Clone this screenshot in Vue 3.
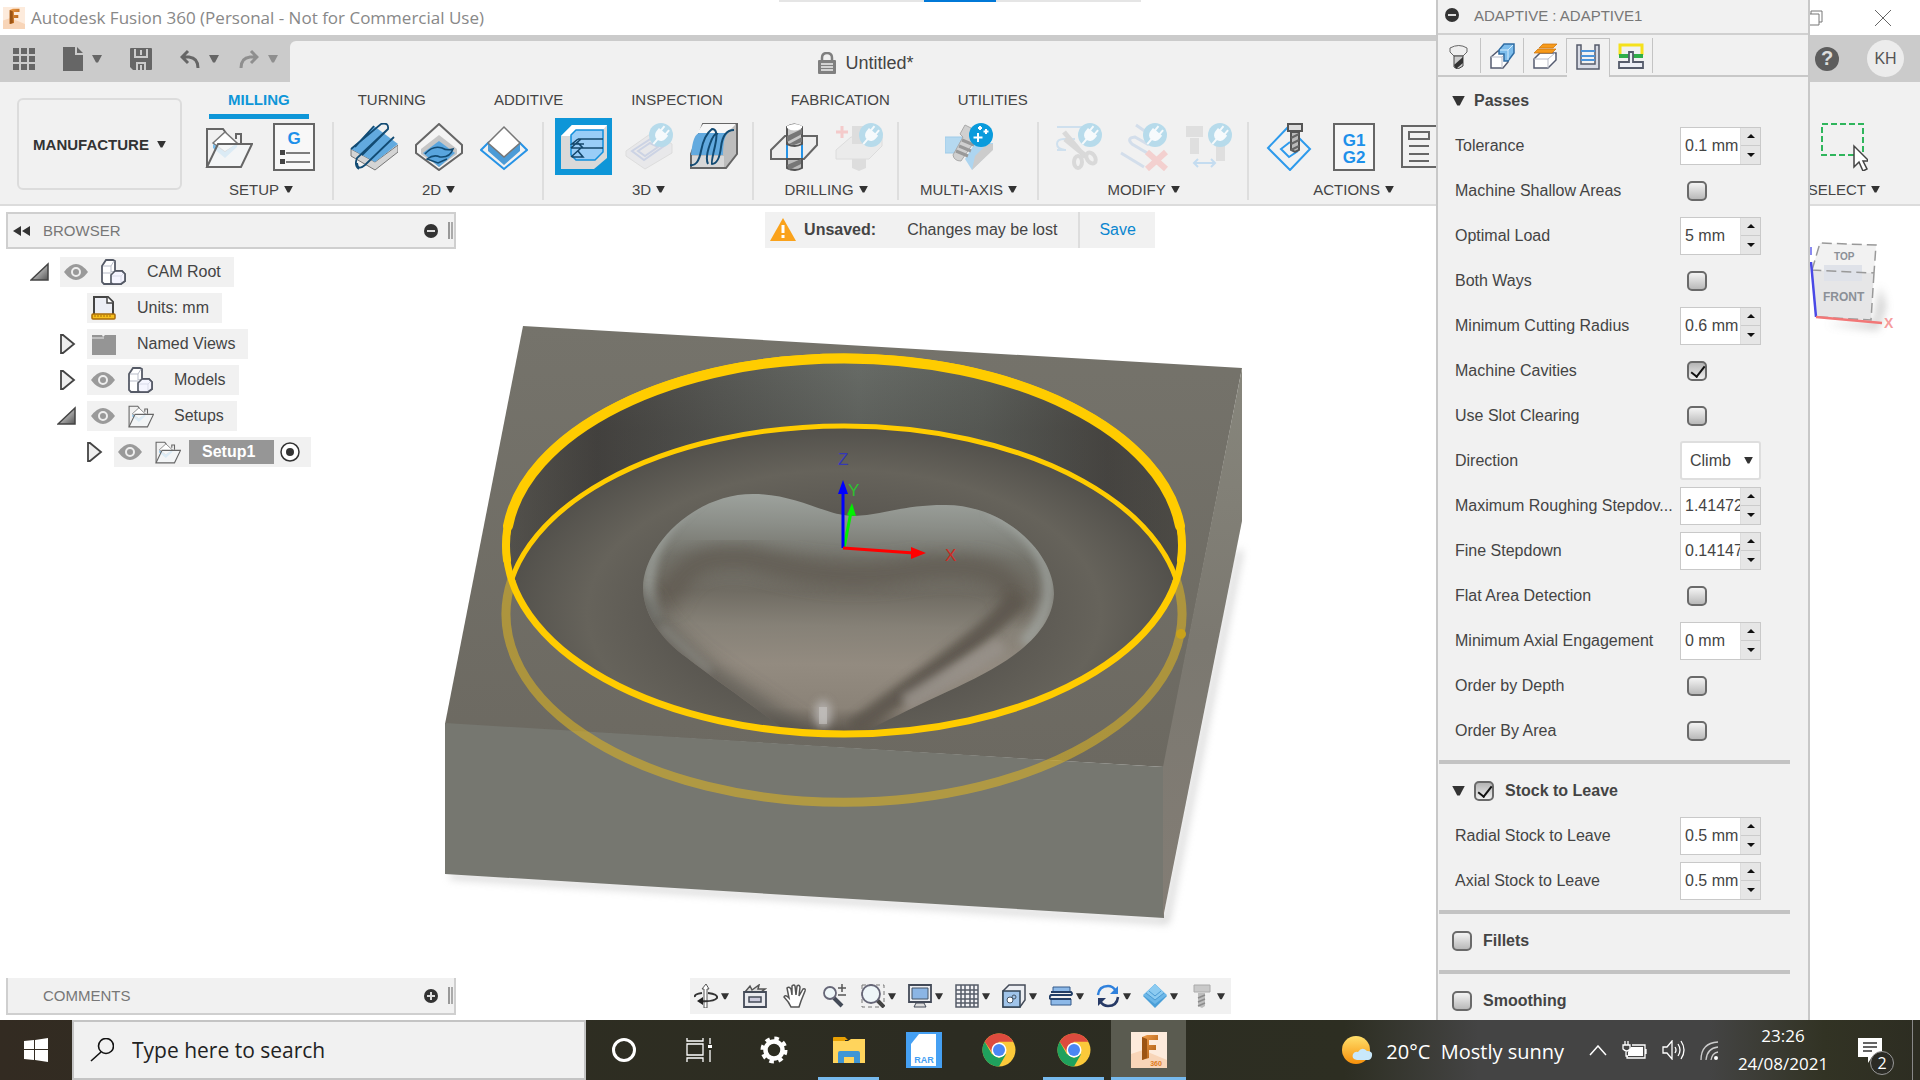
<script setup>
import { ref } from 'vue';

const ribbonTabs = ['MILLING', 'TURNING', 'ADDITIVE', 'INSPECTION', 'FABRICATION', 'UTILITIES'];
const activeTab = ref('MILLING');

const groups = [
    { label: 'SETUP', icons: ['setup', 'gcode'] },
    { label: '2D', icons: ['face', 'pocket', 'contour'] },
    { label: '3D', icons: ['adaptive', 'flow', 'parallel'] },
    { label: 'DRILLING', icons: ['drill', 'recognize'] },
    { label: 'MULTI-AXIS', icons: ['multi'] },
    { label: 'MODIFY', icons: ['trim', 'remove', 'replace'] },
    { label: 'ACTIONS', icons: ['simulate', 'post', 'sheet'] }
];
const activeTool = ref('adaptive');

// letras desenhadas dentro dos icones
const iconText = {
    gcode: [{ t: 'G', x: 24, y: 21, size: 17, color: '#1d90ea' }],
    post: [
        { t: 'G1', x: 24, y: 23, size: 17, color: '#1d90ea' },
        { t: 'G2', x: 24, y: 40, size: 17, color: '#1d90ea' }
    ],
    rar: [{ t: 'RAR', x: 18, y: 31, size: 9, color: '#45a0f3' }],
    fusion: [{ t: '360', x: 25, y: 34, size: 7, color: '#dd7a21' }]
};

const tree = ref([
    { label: 'CAM Root', level: 0, arrow: 'open', eye: true, icon: 'cubes' },
    { label: 'Units: mm', level: 1, arrow: '', eye: false, icon: 'units' },
    { label: 'Named Views', level: 1, arrow: 'closed', eye: false, icon: 'folder' },
    { label: 'Models', level: 1, arrow: 'closed', eye: true, icon: 'cubes' },
    { label: 'Setups', level: 1, arrow: 'open', eye: true, icon: 'setup' },
    { label: 'Setup1', level: 2, arrow: 'closed', eye: true, icon: 'setup', selected: true }
]);

const panelTabs = ['tool', 'geometry', 'heights', 'passes', 'linking'];
const activePanelTab = ref('passes');

// type: num = campo com setas, check = caixa, list = lista
const passes = ref([
    { id: 'tolerance', label: 'Tolerance', type: 'num', value: '0.1 mm' },
    { id: 'shallow', label: 'Machine Shallow Areas', type: 'check', value: false },
    { id: 'load', label: 'Optimal Load', type: 'num', value: '5 mm' },
    { id: 'both', label: 'Both Ways', type: 'check', value: false },
    { id: 'radius', label: 'Minimum Cutting Radius', type: 'num', value: '0.6 mm' },
    { id: 'cavities', label: 'Machine Cavities', type: 'check', value: true },
    { id: 'slot', label: 'Use Slot Clearing', type: 'check', value: false },
    { id: 'direction', label: 'Direction', type: 'list', value: 'Climb' },
    { id: 'rough', label: 'Maximum Roughing Stepdov...', type: 'num', value: '1.41472' },
    { id: 'fine', label: 'Fine Stepdown', type: 'num', value: '0.14147' },
    { id: 'flat', label: 'Flat Area Detection', type: 'check', value: false },
    { id: 'axialmin', label: 'Minimum Axial Engagement', type: 'num', value: '0 mm' },
    { id: 'depth', label: 'Order by Depth', type: 'check', value: false },
    { id: 'area', label: 'Order By Area', type: 'check', value: false }
]);
const stock = ref([
    { id: 'radial', label: 'Radial Stock to Leave', value: '0.5 mm' },
    { id: 'axial', label: 'Axial Stock to Leave', value: '0.5 mm' }
]);
const stockOn = ref(true);
const fillets = ref(false);
const smoothing = ref(false);

const step = (row, delta) => {
    const n = parseFloat(row.value);
    if (!isNaN(n)) row.value = Math.round((n + delta) * 1e5) / 1e5 + ' mm';
};

const navTools = [
    { icon: 'orbit', menu: true },
    { icon: 'lookat' },
    { icon: 'hand' },
    { icon: 'zoom' },
    { icon: 'zoomwin', menu: true },
    { icon: 'display', menu: true },
    { icon: 'gridset', menu: true },
    { icon: 'views', menu: true },
    { icon: 'layers', menu: true },
    { icon: 'refresh', menu: true },
    { icon: 'stockview', menu: true },
    { icon: 'bolt', menu: true }
];

const taskApps = [
    { icon: 'cortana', state: '' },
    { icon: 'taskview', state: '' },
    { icon: 'gear', state: '' },
    { icon: 'explorer', state: 'open' },
    { icon: 'rar', state: '' },
    { icon: 'chrome', state: '' },
    { icon: 'chrome', state: 'open' },
    { icon: 'fusion', state: 'current' }
];
</script>

<template>
    <div class="app">
        <!-- icones -->
        <svg class="sprite" width="0" height="0" aria-hidden="true">
            <defs>
                <linearGradient id="tri" x1="0" y1="0" x2="1" y2="1"><stop offset="0" stop-color="#fff" /><stop offset="1" stop-color="#555" /></linearGradient>
                <linearGradient id="sun" x1="0" y1="0" x2="0" y2="1"><stop offset="0" stop-color="#ffdf6b" /><stop offset="1" stop-color="#f7900a" /></linearGradient>
                <linearGradient id="fus" x1="0" y1="0" x2="1" y2="1"><stop offset="0" stop-color="#f3a04d" /><stop offset="1" stop-color="#a5540c" /></linearGradient>
            </defs>
            <symbol id="i-caret" viewBox="0 0 10 8"><path d="M0 0h10L6 7.500H4z" fill="currentColor" /></symbol>
            <symbol id="i-apps" viewBox="0 0 22 22"><path d="M0 0h6v6H0zM8 0h6v6H8zM16 0h6v6h-6zM0 8h6v6H0zM8 8h6v6H8zM16 8h6v6h-6zM0 16h6v6H0zM8 16h6v6H8zM16 16h6v6h-6z" fill="#666" /></symbol>
            <symbol id="i-file" viewBox="0 0 20 24"><path d="M0 0h12v8h8v16H0zM14 0l6 6h-6z" fill="#666" /></symbol>
            <symbol id="i-save" viewBox="0 0 22 22"><path d="M0 1q0-1 1-1h20q1 0 1 1v20q0 1-1 1H3l-3-3z" fill="#666" /><path d="M5 1v8h12V1M7 22v-7h8v7M11 17v5M11 2v5" fill="none" stroke="#cbcbcb" stroke-width="2" /></symbol>
            <symbol id="i-undo" viewBox="0 0 20 20"><path d="M8 2L2 8l6 6M2 8h7q9 1 9 11" fill="none" stroke="#666" stroke-width="3" /></symbol>
            <symbol id="i-redo" viewBox="0 0 20 20"><path d="M12 2l6 6-6 6M18 8h-7q-9 1-9 11" fill="none" stroke="#8f8f8f" stroke-width="3" /></symbol>
            <symbol id="i-lock" viewBox="0 0 18 22"><path d="M4 10V6q0-5 5-5t5 5v4" fill="none" stroke="#808080" stroke-width="2.500" /><rect y="8" width="18" height="14" rx="1" fill="#808080" /><path d="M3 12h12M3 15h12M3 18h12" stroke="#eee" stroke-width="1.500" /></symbol>
            <symbol id="i-warn" viewBox="0 0 26 24"><path d="M13 0l13 23H0z" fill="#faa21b" /><path d="M13 7v8M13 17v3" stroke="#fff" stroke-width="3" /></symbol>

            <symbol id="i-setup" viewBox="0 0 48 48"><path d="M2 44V6h16l3 4M31 16v-5h5v9" fill="none" stroke="#666" stroke-width="2" /><path d="M8 20L20 9l13 12-13 8z" fill="#fff" stroke="#777" stroke-width="1.500" /><path d="M8 21v4l12 10 12-11v-4l-12 9z" fill="#7bbdea" /><path d="M2 44L13 21h34L36 44z" fill="#f4f6f8" fill-opacity=".8" stroke="#666" stroke-width="2" /></symbol>
            <symbol id="i-gcode" viewBox="0 0 48 48"><rect x="4" y="1" width="40" height="46" fill="#f8f8f8" stroke="#666" stroke-width="2" /><path d="M10 27h5v5h-5zM10 36h5v5h-5z" fill="#444" /><path d="M16 30h24M16 39h24" stroke="#555" stroke-width="1.500" /></symbol>
            <symbol id="i-face" viewBox="0 0 48 48"><path d="M1 26v7l24 14 23-18v-7L25 39z" fill="#d4d4d4" stroke="#777" /><path d="M1 26L24 3l24 18-23 18z" fill="#62aadf" /><path d="M1 26L31 1q8-2 7 5L7 35q-3 8 2 11M12 32L38 6M7 40q1 8 8 2L44 14M24 3L5 24" fill="none" stroke="#124b73" stroke-width="1.800" /></symbol>
            <symbol id="i-pocket" viewBox="0 0 48 48"><path d="M24 1l23 21v8L24 47 1 30v-8z" fill="#f4f4f4" stroke="#666" stroke-width="2" /><path d="M24 12L6 26v5l18 13 18-13v-5z" fill="#c6c6c6" /><path d="M24 18L8 30l16 14 16-14z" fill="#59a5de" /><path d="M10 31q8-9 17-6 5 3 11 1-3 9-13 8-6-3-13 2l11 4 9-4" fill="none" stroke="#124b73" stroke-width="1.500" /></symbol>
            <symbol id="i-contour" viewBox="0 0 48 48"><path d="M9 19l-8 8 23 19 23-19-8-8" fill="none" stroke="#2693e6" stroke-width="2" /><path d="M8 20v8l16 14 16-14v-8L24 34z" fill="#4b9bd7" /><path d="M24 4l16 16-16 14L8 20z" fill="#fff" stroke="#777" stroke-width="1.500" /></symbol>
            <symbol id="i-adaptive" viewBox="0 0 48 48"><path d="M1 13L12 2h35v33L34 46H1z" fill="#d9d9d9" /><path d="M1 13L12 2h35l-4 5H16L11 13z" fill="#fff" /><path d="M11 12l5-5h27v22l-8 8H16l-5-5z" fill="#99cdf7" stroke="#118fdc" stroke-width="1.500" /><path d="M18 16h25M18 25h25M11 25l10-9M11 34l10-9M11 25h12l-5-5M12 34h11l-5-6M18 16l-6 5h12" fill="none" stroke="#14476b" stroke-width="1.600" /></symbol>
            <symbol id="i-plug" viewBox="0 0 24 24"><circle cx="12" cy="12" r="12" fill="#b7dbeb" /><g transform="rotate(40 12 12)" fill="#f6fafc"><path d="M8 3h2v6H8zM14 3h2v6h-2zM6 8h12v4a6 6 0 0 1-12 0zM11 17h2v7h-2z" /></g></symbol>
            <symbol id="i-flow" viewBox="0 0 48 48"><path d="M1 28L28 9l19 12v9L20 46 1 33z" fill="#e8e8ea" stroke="#ddd" /><path d="M7 28l20-13 12 8-20 14zM13 28l12-8 8 4-13 9z" fill="none" stroke="#ccd3e4" stroke-width="2" /><use href="#i-plug" x="24" y="0" width="24" height="24" /></symbol>
            <symbol id="i-parallel" viewBox="0 0 48 48"><path d="M13 1h34v30L36 45H1V31z" fill="#bdbdbd" stroke="#666" stroke-width="2" /><path d="M13 1h33l-9 9H7z" fill="#f7f7f7" /><path d="M1 32Q3 10 10 10h28q-5 4-5 22z" fill="#62aadf" /><path d="M2 33h32v11H2z" fill="#d8d8d8" /><path d="M0 42q8 2 11-14T22 6q7 0 3 17t-3 18q7 0 9-17T44 7M18 41q-3-6 2-20 4-12 8-10" fill="none" stroke="#124b73" stroke-width="2" /></symbol>
            <symbol id="i-drill" viewBox="0 0 48 48"><path d="M15 13h32v9L34 36H1v-9z" fill="#eee" stroke="#666" stroke-width="2" /><path d="M17 14v22M32 14v22" stroke="#2693e6" stroke-width="2" /><path d="M17 4q7-5 15 0v17q-7 4-15 0z" fill="#c8c8c8" stroke="#555" stroke-width="2" /><path d="M17 5q7 5 15 0V3q-7-4-15 0z" fill="#fff" /><path d="M17 13l15-7v5l-15 8zM19 21l13-7v5l-8 3z" fill="#777" /><path d="M17 36h15v9q-7 4-15 0z" fill="#bbb" stroke="#555" stroke-width="2" /><path d="M17 42l14-6v5l-12 6z" fill="#777" /></symbol>
            <symbol id="i-recognize" viewBox="0 0 48 48"><path d="M16 14h31v9L34 36H1v-9z" fill="#ebebeb" stroke="#dcdcdc" /><path d="M17 3h14v18H17zM17 36h14v9l-7 3-7-3z" fill="#ddd" /><path d="M7 3v12M1 9h12" stroke="#f4caca" stroke-width="3" /><use href="#i-plug" x="24" y="0" width="24" height="24" /></symbol>
            <symbol id="i-multi" viewBox="0 0 48 48"><path d="M0 14h18L10 30H0z" fill="#b5d9f0" stroke="#9fcbe8" /><path d="M20 36l10-16h18v6L27 47z" fill="#add5f0" /><path d="M27 47l21-20v-6h-6L30 33z" fill="#ccc" /><path d="M20 2l16 8-4 10-3-1-13 19q-7 0-8-6l10-18-3-3z" fill="#d0d0d0" stroke="#aaa" /><path d="M17 17l12 5M14 23l12 5M11 28l12 5" stroke="#999" stroke-width="3" /><circle cx="36" cy="12" r="12" fill="#0a9bdc" /><path d="M33 10v9M28.500 14.500h9M35 3v4M33 5h4M41 6v5M38.500 8.500h5" stroke="#fff" stroke-width="2" /></symbol>
            <symbol id="i-trim" viewBox="0 0 48 48"><path d="M2 4h25M2 27h9M20 16H9Q2 16 2 21t8 6" fill="none" stroke="#cfe0ee" stroke-width="2" /><path d="M9 9l21 25M10 16l22 18" stroke="#d9d9d9" stroke-width="5" /><ellipse cx="23" cy="39" rx="4" ry="6" fill="none" stroke="#d9d9d9" stroke-width="4" /><ellipse cx="36" cy="35" rx="4" ry="6" transform="rotate(-35 36 35)" fill="none" stroke="#d9d9d9" stroke-width="4" /><use href="#i-plug" x="23" y="0" width="24" height="24" /></symbol>
            <symbol id="i-remove" viewBox="0 0 48 48"><path d="M16 2l10 7M1 30l23 14M34 34L12 21q-6-6 3-7l14 8" fill="none" stroke="#d3deeb" stroke-width="3" /><path d="M27 29l19 17M46 29L27 46" stroke="#f3d0cf" stroke-width="6" /><use href="#i-plug" x="23" y="0" width="24" height="24" /></symbol>
            <symbol id="i-replace" viewBox="0 0 48 48"><path d="M1 3h17v11H1zM5 15h9v16H5zM31 22h9v16h-9z" fill="#dfdfdf" /><path d="M9 40h21M13 36l-4 4 4 4M26 36l4 4-4 4" fill="none" stroke="#c4dcf0" stroke-width="2" /><use href="#i-plug" x="23" y="0" width="24" height="24" /></symbol>
            <symbol id="i-simulate" viewBox="0 0 48 48"><path d="M24 3L3 25l22 22 20-21L32 13M25 19l-9 7 8 8 9-6" fill="none" stroke="#2d9aec" stroke-width="2" /><path d="M23 1h14v7H23z" fill="#ddd" stroke="#555" stroke-width="2" /><path d="M26 9h8v18l-4 2-4-2z" fill="#bbb" stroke="#555" stroke-width="2" /><path d="M26 15l8-4M26 21l8-4M26 27l8-4" stroke="#666" stroke-width="2" /></symbol>
            <symbol id="i-post" viewBox="0 0 48 48"><rect x="4" y="1" width="40" height="46" fill="#f7f7f7" stroke="#666" stroke-width="2" /></symbol>
            <symbol id="i-sheet" viewBox="0 0 48 48"><path d="M7 3h35v41H7zM14 9h20v7H14zM14 23h20M14 31h20M14 38h20" fill="none" stroke="#666" stroke-width="2" /></symbol>
            <symbol id="i-select" viewBox="0 0 48 48"><path d="M2 1h41v31H2z" fill="none" stroke="#2fb55c" stroke-width="2" stroke-dasharray="6 3" /><path d="M34 23v21l5-5 4 9 4-2-4-8h6z" fill="#fff" stroke="#444" stroke-width="1.500" /></symbol>

            <symbol id="i-eye" viewBox="0 0 24 16"><path d="M0 8q12-16 24 0-12 16-24 0" fill="#9a9a9a" /><circle cx="12" cy="8" r="4" fill="#999" stroke="#eee" stroke-width="2" /></symbol>
            <symbol id="i-cubes" viewBox="0 0 26 26"><path d="M1 7l4-6h7l2 1v10l7 0 3 3v7l-4 3H3l-2-2z" fill="#fff" stroke="#555a66" stroke-width="1.800" /><path d="M2 14h8M10 14v10M2 7h8l3-5M10 7v6l4-1M10 17h10l3-3M20 17v7" fill="none" stroke="#b9bdc9" /><path d="M10 24v-8l4-4h7l3 3v7l-4 3h-8z" fill="#eef" fill-opacity=".6" stroke="#555a66" stroke-width="1.600" /></symbol>
            <symbol id="i-units" viewBox="0 0 26 26"><path d="M3 20V2h14l5 5v13z" fill="#eceef5" stroke="#444" stroke-width="2" /><path d="M16 2v6h6" fill="#fff" stroke="#444" stroke-width="1.500" /><rect x="1" y="19" width="23" height="5" rx="1" fill="#f7c01d" stroke="#a86b0a" stroke-width="1.500" /><path d="M4 20v2M7 20v2M10 20v2M13 20v2M16 20v2M19 20v2" stroke="#a86b0a" /></symbol>
            <symbol id="i-folder" viewBox="0 0 26 26"><path d="M1 4h10l1 2 2-2h11v20H1z" fill="#959595" /><path d="M1 7h12" stroke="#e9e9e9" /></symbol>

            <symbol id="i-tool" viewBox="0 0 26 26"><path d="M4 5q9-5 17 0v4l-4 4H8L4 9z" fill="#eee" stroke="#666" /><path d="M8 13h9v10l-5 3-4-2z" fill="#ccc" stroke="#444" /><path d="M8 22l9-8v6l-7 6z" fill="#333" /></symbol>
            <symbol id="i-geometry" viewBox="0 0 26 26"><path d="M2 14l7-6h10v11l-5 6H2z" fill="#fff" stroke="#555c70" stroke-width="1.500" /><path d="M2 14h11v11M13 14l4-4" fill="none" stroke="#b9bdc9" /><path d="M10 7l5-6h10v9l-6 8h-4v-7h-5z" fill="#7dbdec" stroke="#2f6ca3" stroke-width="1.500" /><path d="M11 7h8v10M19 7l5-5" fill="none" stroke="#d6edfc" /></symbol>
            <symbol id="i-heights" viewBox="0 0 26 26"><path d="M2 16l6-6h16v7l-8 8H2z" fill="#fff" stroke="#555c70" stroke-width="1.500" /><path d="M2 16h14v9M16 16l7-6" fill="none" stroke="#b9bdc9" /><path d="M2 10l4-4h18l-4 4zM7 5l4-4h14l-4 4z" fill="#f79a1a" stroke="#c8700a" stroke-width=".7" /></symbol>
            <symbol id="i-passes" viewBox="0 0 26 26"><path d="M2 1h4v19h14V1h4v24H2z" fill="#d9dce6" stroke="#555b6b" stroke-width="1.500" /><path d="M6 7h14M6 12h14M6 16h14" stroke="#4c94da" stroke-width="2" /></symbol>
            <symbol id="i-linking" viewBox="0 0 26 26"><path d="M2 12V2h22v10" fill="none" stroke="#f5e11c" stroke-width="3" /><path d="M1 13h24" stroke="#2fae49" stroke-width="4" /><path d="M11 9h4v10h10v6H1v-6h10z" fill="#eceef5" stroke="#555b6b" stroke-width="1.800" /></symbol>

            <symbol id="i-orbit" viewBox="0 0 24 24"><path d="M12 0l3 5h-2v19h-3V5H8z" fill="#fff" stroke="#555" /><path d="M14 9q10 1 9 5-3 4-17 3M8 9q-8 1-7 4" fill="none" stroke="#333" stroke-width="2" /><path d="M3 17l6-4v8z" fill="#222" /></symbol>
            <symbol id="i-lookat" viewBox="0 0 24 24"><path d="M2 8l5-6 2 4 7-5-1 4 7 0-4 3" fill="#ddd" stroke="#555" stroke-width="1.500" /><path d="M1 8h22v15H1z" fill="#e9eaee" stroke="#444b58" stroke-width="1.800" /><path d="M6 13h12v5H6z" fill="#ccd" stroke="#444b58" stroke-width="1.500" /></symbol>
            <symbol id="i-hand" viewBox="0 0 24 24"><path d="M8 23q-2-5-7-10 1-3 5 1L4 4q2-2 4 1l1 6V2q2-2 3 0l1 9 1-9q2-2 3 1l-1 9 4-7q3-1 2 2l-4 10-2 6z" fill="#fff" stroke="#555" stroke-width="1.500" /></symbol>
            <symbol id="i-zoom" viewBox="0 0 24 24"><path d="M11 14l8 8" stroke="#444b58" stroke-width="4" /><circle cx="7" cy="9" r="6" fill="#eef6f8" stroke="#667" stroke-width="1.800" /><path d="M19 0v8M15 4h8M15 11h8" stroke="#555" stroke-width="1.500" /></symbol>
            <symbol id="i-zoomwin" viewBox="0 0 24 24"><path d="M1 1h22v22H1z" fill="none" stroke="#777" stroke-dasharray="4 3" /><path d="M16 16l7 7" stroke="#444" stroke-width="4" /><circle cx="10" cy="10" r="9" fill="#eef6f8" stroke="#667" stroke-width="1.800" /></symbol>
            <symbol id="i-display" viewBox="0 0 24 24"><path d="M1 1h22v17H1z" fill="#eceef2" stroke="#444b58" stroke-width="1.800" /><path d="M4 4h16v11H4z" fill="#8bb5e4" stroke="#456" /><path d="M8 19h8l2 4H6z" fill="#ddd" stroke="#444b58" /></symbol>
            <symbol id="i-gridset" viewBox="0 0 24 24"><path d="M1 1h22v22H1zM6 1v22M10 1v22M15 1v22M19 1v22M1 6h22M1 10h22M1 15h22M1 19h22" fill="#f3f3f6" stroke="#555c68" stroke-width="1.500" /></symbol>
            <symbol id="i-views" viewBox="0 0 24 24"><path d="M1 7l6-6h16v15l-5 7H1z" fill="#eceef2" stroke="#444b58" stroke-width="1.500" /><path d="M1 7h17v16H1z" fill="#9fc4ea" stroke="#345" stroke-width="1.500" /><circle cx="8" cy="16" r="3" fill="#fff" stroke="#456" /><circle cx="12" cy="13" r="2" fill="none" stroke="#456" /></symbol>
            <symbol id="i-layers" viewBox="0 0 24 24"><path d="M4 3h17v5H4zM2 15h20v6H2z" fill="#8db9e8" stroke="#345b8a" /><path d="M2 8h20q2 2 0 3H2q-3 3 0 4h20" fill="none" stroke="#223e66" stroke-width="2" /></symbol>
            <symbol id="i-refresh" viewBox="0 0 24 24"><path d="M2 11q1-9 10-9 5 0 8 5" fill="none" stroke="#2f81dd" stroke-width="2.500" /><path d="M22 2v8h-8z" fill="#2f81dd" /><path d="M22 13q-1 9-10 9-5 0-8-5" fill="none" stroke="#273a66" stroke-width="2.500" /><path d="M2 22v-8h8z" fill="#273a66" /></symbol>
            <symbol id="i-stockview" viewBox="0 0 24 24"><path d="M12 0l12 12-12 12L0 12z" fill="#4b9fd8" /><path d="M12 0l12 11-12 9L0 11z" fill="#6cb7e8" /><path d="M12 0l9 9-9 7-9-7z" fill="#8ccbf1" /><path d="M3 9l9 7 9-7M6 7l6 5 6-5" fill="none" stroke="#4b9bd3" /></symbol>
            <symbol id="i-bolt" viewBox="0 0 24 24"><path d="M4 1h16v7H4z" fill="#c9c9c9" stroke="#aaa" /><path d="M8 9h7v13l-3 2-4-2z" fill="#bdbdbd" /><path d="M8 14l7-3M8 18l7-3M8 22l7-3" stroke="#8c8c8c" stroke-width="1.500" /></symbol>

            <symbol id="i-cortana" viewBox="0 0 36 36"><circle cx="18" cy="18" r="10.500" fill="none" stroke="#fff" stroke-width="3" /></symbol>
            <symbol id="i-taskview" viewBox="0 0 36 36"><path d="M6 6v3h16V6M6 30v-4h16v4M6 12h16v11H6zM29 6v6M29 18v12" fill="none" stroke="#fff" stroke-width="1.300" /><path d="M27 13h4v3h-4z" fill="#fff" /></symbol>
            <symbol id="i-gear" viewBox="0 0 36 36"><circle cx="18" cy="18" r="8.500" fill="none" stroke="#fff" stroke-width="4.500" /><circle cx="18" cy="18" r="11.500" fill="none" stroke="#fff" stroke-width="4" stroke-dasharray="4.500 4.530" /></symbol>
            <symbol id="i-explorer" viewBox="0 0 36 36"><path d="M2 6q0-1 1-1h11l3 3h-3v3H2z" fill="#e8a003" /><path d="M2 9h15l3-2h14v24H2z" fill="#ffd45c" /><path d="M7 31V21q0-2 2-2h18q2 0 2 2v10h-6v-6H13v6z" fill="#3f96d6" /></symbol>
            <symbol id="i-rar" viewBox="0 0 36 36"><rect width="36" height="36" fill="#45a0f3" /><path d="M5 12l8-10h17v32H5z" fill="#fff" /></symbol>
            <symbol id="i-chrome" viewBox="0 0 36 36"><circle cx="18" cy="18" r="16.500" fill="#fbc93a" /><path d="M3.700 9.700A16.500 16.500 0 0 1 32.300 9.700H18L11 20z" fill="#dd4b3e" /><path d="M3.700 9.700A16.500 16.500 0 0 0 18 34.500l7.200-12.500L18 26l-7.200-4z" fill="#1fa15d" /><circle cx="18" cy="18" r="7.500" fill="#fff" /><circle cx="18" cy="18" r="6" fill="#4b86f3" /></symbol>
            <symbol id="i-fusion" viewBox="0 0 36 36"><rect width="36" height="36" fill="#fdebdc" /><path d="M0 22l12-4 24 10v8H0z" fill="#f8d5b8" /><path d="M11 5l5-2h11v5h-9v5h7v5h-7v8l-7 2z" fill="url(#fus)" /><path d="M11 5l5 2v19l-5 2z" fill="#9c5414" /></symbol>
        </svg>

        <header>
            <div class="titlebar">
                <svg class="logo"><use href="#i-fusion" /></svg>
                <span>Autodesk Fusion 360 (Personal - Not for Commercial Use)</span>
                <div class="snap"><i></i></div>
                <div class="window-buttons">
                    <button aria-label="Restore"><svg width="16" height="16"><path d="M1 4h11v11H1zM4 4V1h11v11h-3" fill="none" stroke="#777" /></svg></button>
                    <button aria-label="Close"><svg width="16" height="16"><path d="M0 0l16 16M16 0L0 16" stroke="#666" /></svg></button>
                </div>
            </div>

            <div class="quickbar">
                <div class="quick">
                    <button aria-label="Data panel"><svg width="22" height="22"><use href="#i-apps" /></svg></button>
                    <button aria-label="File"><svg width="20" height="24"><use href="#i-file" /></svg><svg class="caret"><use href="#i-caret" /></svg></button>
                    <button aria-label="Save"><svg width="22" height="22"><use href="#i-save" /></svg></button>
                    <button aria-label="Undo"><svg width="20" height="20"><use href="#i-undo" /></svg><svg class="caret"><use href="#i-caret" /></svg></button>
                    <button aria-label="Redo" class="dim"><svg width="20" height="20"><use href="#i-redo" /></svg><svg class="caret"><use href="#i-caret" /></svg></button>
                </div>
                <div class="document"><svg width="18" height="22"><use href="#i-lock" /></svg>Untitled*</div>
                <div class="account">
                    <button class="help" aria-label="Help">?</button>
                    <button class="avatar">KH</button>
                </div>
            </div>

            <div class="ribbon">
                <button class="workspace">MANUFACTURE <svg class="caret"><use href="#i-caret" /></svg></button>
                <div class="ribbon-main">
                    <nav class="ribbon-tabs">
                        <button v-for="t in ribbonTabs" :key="t" :class="{ active: activeTab === t }" @click="activeTab = t">{{ t }}</button>
                    </nav>
                    <div class="groups">
                        <div v-for="g in groups" :key="g.label" class="group">
                            <div class="group-icons">
                                <button v-for="i in g.icons" :key="i" :class="{ active: activeTool === i }" :aria-label="i" @click="activeTool = i">
                                    <svg width="48" height="48">
                                        <use :href="'#i-' + i" />
                                        <text v-for="l in iconText[i]" :key="l.t" class="icon-text" :x="l.x" :y="l.y" :font-size="l.size" :fill="l.color">{{ l.t }}</text>
                                    </svg>
                                </button>
                            </div>
                            <button class="group-label">{{ g.label }} <svg class="caret"><use href="#i-caret" /></svg></button>
                        </div>
                        <div class="group select-group">
                            <div class="group-icons">
                                <button aria-label="select"><svg width="48" height="48"><use href="#i-select" /></svg></button>
                            </div>
                            <button class="group-label">SELECT <svg class="caret"><use href="#i-caret" /></svg></button>
                        </div>
                    </div>
                </div>
            </div>
        </header>

        <main>
            <!-- peça 3D -->
            <svg class="scene" viewBox="0 206 1920 814" preserveAspectRatio="xMidYMid slice">
                <defs>
                    <linearGradient id="top" x1="0" y1="0" x2="0" y2="1"><stop offset="0" stop-color="#75736b" /><stop offset="1" stop-color="#6c6961" /></linearGradient>
                    <linearGradient id="side" x1="0" y1="0" x2="0" y2="1"><stop offset="0" stop-color="#87867c" /><stop offset=".5" stop-color="#7b7870" /><stop offset="1" stop-color="#837d75" /></linearGradient>
                    <linearGradient id="wall" x1="0" y1="0" x2="1" y2="0"><stop offset="0" stop-color="#5e5c56" /><stop offset=".14" stop-color="#484643" /><stop offset=".32" stop-color="#595a56" /><stop offset=".52" stop-color="#696d68" /><stop offset=".7" stop-color="#5f625d" /><stop offset=".88" stop-color="#4c4a46" /><stop offset="1" stop-color="#55534d" /></linearGradient>
                    <linearGradient id="wallShade" x1="0" y1="0" x2="0" y2="1"><stop offset="0" stop-color="#2b2a28" stop-opacity="0" /><stop offset=".2" stop-color="#2b2a28" stop-opacity=".2" /><stop offset="1" stop-color="#2b2a28" stop-opacity=".2" /></linearGradient>
                    <radialGradient id="floor"><stop offset="0" stop-color="#54524c" /><stop offset=".5" stop-color="#5a5751" /><stop offset=".76" stop-color="#66635b" /><stop offset="1" stop-color="#52504b" /></radialGradient>
                    <linearGradient id="heart" gradientUnits="userSpaceOnUse" x1="850" y1="492" x2="846" y2="732">
                        <stop offset="0" stop-color="#9fa49f" /><stop offset=".14" stop-color="#8b8e88" /><stop offset=".28" stop-color="#74736b" /><stop offset=".42" stop-color="#706c63" /><stop offset=".56" stop-color="#868177" /><stop offset=".72" stop-color="#938b80" /><stop offset=".9" stop-color="#8b8378" /><stop offset="1" stop-color="#5c564e" />
                    </linearGradient>
                    <clipPath id="pocketClip"><ellipse cx="844" cy="545" rx="338" ry="188" /></clipPath>
                    <clipPath id="heartClip"><path d="M753 494C797 494 826 516 854 516C882 515 902 505 944 505C1004 504 1054 553 1054 594C1053 620 1034 642 1007 660C987 673 964 684 938 696C912 708 884 722 862 733H788C764 713 718 682 686 657C662 640 643 614 643 588C643 548 692 494 753 494z" /></clipPath>
                    <filter id="soft" x="-30%" y="-30%" width="160%" height="160%"><feGaussianBlur stdDeviation="9" /></filter>
                    <filter id="soft2" x="-30%" y="-30%" width="160%" height="160%"><feGaussianBlur stdDeviation="4" /></filter>
                </defs>
                <path d="M450 876L1166 921L1240 550" fill="none" stroke="#999" stroke-width="5" opacity=".5" filter="url(#soft2)" />
                <path d="M523 326L1242 368L1164 767L445 724z" fill="url(#top)" />
                <path d="M445 723L1164 767V918L445 874z" fill="#767770" />
                <path d="M1242 368V521L1163 918V767z" fill="url(#side)" />

                <g clip-path="url(#pocketClip)">
                    <rect x="500" y="350" width="690" height="400" fill="url(#wall)" />
                    <rect x="500" y="350" width="690" height="400" fill="url(#wallShade)" />
                    <ellipse cx="844" cy="613" rx="338" ry="188" fill="url(#floor)" />
                    <g clip-path="url(#heartClip)">
                        <rect x="630" y="480" width="440" height="260" fill="url(#heart)" />
                        <path d="M664 606C680 566 700 552 752 558C800 572 850 580 910 570C970 560 1030 572 1012 612" fill="none" stroke="#5e594f" stroke-width="22" opacity=".8" filter="url(#soft)" />
                        <path d="M700 495C652 530 638 580 656 622" fill="none" stroke="#a0a5a0" stroke-width="12" opacity=".75" filter="url(#soft2)" />
                        <path d="M638 596C655 650 730 690 800 738" fill="none" stroke="#55534e" stroke-width="26" opacity=".7" filter="url(#soft)" />
                        <path d="M660 626L710 672" fill="none" stroke="#9a9b95" stroke-width="8" opacity=".5" filter="url(#soft2)" />
                        <path d="M990 508C1058 545 1064 600 1024 644" fill="none" stroke="#a1a6a1" stroke-width="13" opacity=".75" filter="url(#soft2)" />
                        <path d="M1018 596C1000 625 940 665 890 702L852 730" fill="none" stroke="#5e594f" stroke-width="19" opacity=".95" filter="url(#soft2)" />
                        <path d="M1002 645L905 703" fill="none" stroke="#98928b" stroke-width="17" opacity=".8" filter="url(#soft2)" />
                        <path d="M780 732H860" stroke="#45413b" stroke-width="12" filter="url(#soft2)" />
                        <ellipse cx="823" cy="714" rx="9" ry="14" fill="#b9b6b4" opacity=".8" filter="url(#soft2)" />
                        <rect x="819" y="707" width="8" height="17" fill="#cfcdcb" opacity=".5" />
                    </g>
                    <ellipse cx="844" cy="614" rx="338" ry="188" fill="none" stroke="#fc0" stroke-width="5" />
                </g>
                <path d="M512 579A338 188 0 1 0 1176 579" fill="none" stroke="#e0b61f" stroke-width="9" opacity=".55" />
                <circle cx="1181" cy="634" r="5" fill="#c9a21b" />
                <ellipse cx="844" cy="546" rx="338" ry="188" fill="none" stroke="#fc0" stroke-width="7" />
                <path d="M507 560A338 188 0 1 1 1181 560" fill="none" stroke="#fc0" stroke-width="8" stroke-linecap="round" />
                <path d="M508 526A338 188 0 0 1 1180 526" fill="none" stroke="#fc0" stroke-width="10" stroke-linecap="round" />

                <path d="M844 548L851 512" stroke="#00f000" stroke-width="3" /><path d="M847 515L852 503l4 13z" fill="#00f000" />
                <path d="M843 548V490" stroke="#00f" stroke-width="3" /><path d="M838 494L843 480l5 14z" fill="#00f" />
                <path d="M843 548L914 553" stroke="#f00" stroke-width="3" /><path d="M911 547l15 6-15 6z" fill="#f00" />
                <g font-family="Liberation Sans" font-size="17">
                    <text x="838" y="465" fill="#3438b5">Z</text>
                    <text x="848" y="496" fill="#2fc12f">Y</text>
                    <text x="945" y="561" fill="#cc2b22">X</text>
                </g>
            </svg>

            <div class="overlay-row top">
                <section class="browser">
                    <div class="bar">
                        <svg width="17" height="10"><path d="M8 0v10L0 5zM17 0v10L9 5z" fill="#333" /></svg>
                        <span>BROWSER</span>
                        <button class="round" aria-label="Collapse"><svg width="14" height="14"><circle cx="7" cy="7" r="7" fill="#333" /><path d="M3 7h8" stroke="#ddd" stroke-width="2" /></svg></button>
                        <i class="grip"></i>
                    </div>
                    <ul class="tree">
                        <li v-for="n in tree" :key="n.label" :class="['level' + n.level, { selected: n.selected }]">
                            <svg class="twist" viewBox="0 0 20 20">
                                <path v-if="n.arrow === 'open'" d="M1 18L18 2V18z" fill="url(#tri)" stroke="#444" stroke-width="1.500" />
                                <path v-if="n.arrow === 'closed'" d="M4 1h2l11 9L6 19H4z" fill="#eee" stroke="#444" stroke-width="1.800" />
                            </svg>
                            <div class="node">
                                <svg v-if="n.eye" class="eye"><use href="#i-eye" /></svg>
                                <svg width="26" height="26"><use :href="'#i-' + n.icon" /></svg>
                                <span>{{ n.label }}</span>
                                <svg v-if="n.selected" width="20" height="20"><circle cx="10" cy="10" r="9" fill="#fff" stroke="#333" stroke-width="1.500" /><circle cx="10" cy="10" r="4" fill="#333" /></svg>
                            </div>
                        </li>
                    </ul>
                </section>

                <div class="notice">
                    <svg width="26" height="24"><use href="#i-warn" /></svg>
                    <b>Unsaved:</b>
                    <span>Changes may be lost</span>
                    <a href="#">Save</a>
                </div>

                <svg class="cube" width="110" height="110" viewBox="1800 236 110 110">
                    <path d="M1826 324l48-2 6-36 6 20-8 24z" fill="#888" opacity=".4" filter="url(#soft2)" />
                    <path d="M1820 243l56 2-2 28-62-3z" fill="#f2f2f2" />
                    <path d="M1812 270l62 3-3 47-54-3z" fill="#e6e6e7" />
                    <path d="M1824 265h38v16h-38z" fill="#dfe2e9" />
                    <path d="M1812 270l8-27 56 2-2 28-62-3M1874 273l-3 47-54-3" fill="none" stroke="#999" stroke-width="1.500" stroke-dasharray="10 5" />
                    <path d="M1811 262l5 55" stroke="#4a49e6" stroke-width="2.500" />
                    <path d="M1811 247v8" stroke="#8a8af0" stroke-width="2" />
                    <path d="M1816 317l66 6" stroke="#f27777" stroke-width="2.500" />
                    <g font-family="Liberation Sans" fill="#8b9097" font-weight="700">
                        <text x="1834" y="260" font-size="10">TOP</text>
                        <text x="1823" y="301" font-size="12">FRONT</text>
                        <text x="1884" y="328" font-size="14" fill="#f59c9c">X</text>
                    </g>
                </svg>
            </div>

            <div class="overlay-row">
                <div class="bar comments">
                    <span>COMMENTS</span>
                    <button class="round" aria-label="Add comment"><svg width="14" height="14"><circle cx="7" cy="7" r="7" fill="#333" /><path d="M3 7h8M7 3v8" stroke="#ddd" stroke-width="2" /></svg></button>
                    <i class="grip"></i>
                </div>
                <div class="navbar">
                    <button v-for="n in navTools" :key="n.icon" :class="{ single: !n.menu }" :aria-label="n.icon">
                        <svg width="24" height="24"><use :href="'#i-' + n.icon" /></svg>
                        <svg v-if="n.menu" class="caret"><use href="#i-caret" /></svg>
                    </button>
                </div>
            </div>
        </main>

        <!-- painel da operação, por cima de tudo -->
        <aside class="panel">
            <div class="panel-head">
                <svg width="14" height="14"><circle cx="7" cy="7" r="7" fill="#333" /><path d="M3 7h8" stroke="#ddd" stroke-width="2" /></svg>
                ADAPTIVE : ADAPTIVE1
            </div>
            <div class="panel-tabs">
                <button v-for="t in panelTabs" :key="t" :class="{ active: activePanelTab === t }" :aria-label="t" @click="activePanelTab = t">
                    <svg width="26" height="26"><use :href="'#i-' + t" /></svg>
                </button>
            </div>
            <div class="panel-body">
                <h3><svg class="fold"><use href="#i-caret" /></svg>Passes</h3>
                <div v-for="r in passes" :key="r.id" class="field">
                    <label :for="r.id">{{ r.label }}</label>
                    <input v-if="r.type === 'check'" :id="r.id" v-model="r.value" type="checkbox" />
                    <div v-else-if="r.type === 'list'" class="list">
                        <select :id="r.id" v-model="r.value">
                            <option>Climb</option>
                            <option>Conventional</option>
                        </select>
                        <svg class="caret"><use href="#i-caret" /></svg>
                    </div>
                    <div v-else class="spin">
                        <input :id="r.id" v-model="r.value" type="text" />
                        <div>
                            <button aria-label="Increase" @click="step(r, 0.1)"></button>
                            <button class="down" aria-label="Decrease" @click="step(r, -0.1)"></button>
                        </div>
                    </div>
                </div>
                <hr />
                <h3>
                    <svg class="fold"><use href="#i-caret" /></svg>
                    <input id="stock" v-model="stockOn" type="checkbox" /><label for="stock">Stock to Leave</label>
                </h3>
                <div v-for="r in stock" :key="r.id" class="field">
                    <label :for="r.id">{{ r.label }}</label>
                    <div class="spin">
                        <input :id="r.id" v-model="r.value" type="text" />
                        <div>
                            <button aria-label="Increase" @click="step(r, 0.1)"></button>
                            <button class="down" aria-label="Decrease" @click="step(r, -0.1)"></button>
                        </div>
                    </div>
                </div>
                <hr />
                <h3><input id="fillets" v-model="fillets" type="checkbox" /><label for="fillets">Fillets</label></h3>
                <hr />
                <h3><input id="smoothing" v-model="smoothing" type="checkbox" /><label for="smoothing">Smoothing</label></h3>
            </div>
        </aside>

        <footer class="taskbar">
            <button class="start" aria-label="Start"><svg width="24" height="24"><path d="M0 3l10-1v9H0zM11 2l13-2v11H11zM0 12h10v10L0 21zM11 12h13v12l-13-2z" fill="#fff" /></svg></button>
            <div class="search">
                <svg width="24" height="24"><circle cx="16" cy="8" r="7.500" fill="none" stroke="#111" stroke-width="1.600" /><path d="M11 14l-10 9" stroke="#111" stroke-width="1.600" /></svg>
                <input type="text" placeholder="Type here to search" aria-label="Search" />
            </div>
            <button v-for="(a, k) in taskApps" :key="k" :class="['task', a.state]" :aria-label="a.icon">
                <svg width="36" height="36">
                    <use :href="'#i-' + a.icon" />
                    <text v-for="l in iconText[a.icon]" :key="l.t" class="icon-text" :x="l.x" :y="l.y" :font-size="l.size" :fill="l.color">{{ l.t }}</text>
                </svg>
            </button>
            <div class="tray">
                <svg width="31" height="30"><circle cx="14" cy="15" r="14" fill="url(#sun)" /><path d="M15 25q-6-1-4-6 2-3 5-2 4-6 9-1 6 0 5 5-1 4-4 4z" fill="#c9e8fb" /></svg>
                <span class="weather">20°C&nbsp; Mostly sunny</span>
                <svg width="18" height="11"><path d="M1 10l8-9 8 9" fill="none" stroke="#fff" stroke-width="1.500" /></svg>
                <svg width="25" height="18"><path d="M9 6h12v9H6v-4z" fill="#fff" /><path d="M10 4h13v13H5v-2M24 8v5M1 4h7v4q-3 4-7 0zM3 0v4M6 0v4M4 10v5h2" fill="none" stroke="#fff" stroke-width="1.300" /></svg>
                <svg width="23" height="20"><path d="M1 7h4l5-6v18l-5-6H1zM13 7q2 3 0 6M16 4q4 6 0 12M19 1q6 9 0 18" fill="none" stroke="#fff" stroke-width="1.300" /></svg>
                <svg width="19" height="19"><path d="M1 19Q1 2 18 1M6 19Q7 7 18 6M11 19q1-7 7-8" fill="none" stroke="#ccc" stroke-width="1.300" /><circle cx="16" cy="17" r="2" fill="#fff" /></svg>
                <div class="clock"><span>23:26</span><span>24/08/2021</span></div>
                <button class="notes" aria-label="Notifications">
                    <svg width="24" height="25"><path d="M0 0h24v19H14l-4 6v-6H0z" fill="#fff" /><path d="M5 5h14M5 9h14M5 13h9" stroke="#333" stroke-width="1.500" /></svg>
                    <span>2</span>
                </button>
            </div>
        </footer>
    </div>
</template>

<style>
body {
    margin: 0;
    background: #fff;
}
</style>

<style scoped>
* {
    box-sizing: border-box;
}

.app {
    position: relative;
    display: flex;
    flex-direction: column;
    height: 100vh;
    overflow: hidden;
    font-family: "Liberation Sans", Arial, sans-serif;
    font-size: 16px;
    color: #444;
}

button,
input,
select {
    font: inherit;
    color: inherit;
    margin: 0;
    padding: 0;
    border: none;
    background: none;
    border-radius: 0;
}

button {
    display: flex;
    align-items: center;
    justify-content: center;
    cursor: pointer;
}

svg {
    flex: none;
    display: block;
}

.sprite {
    position: absolute;
}

.icon-text {
    font-family: "Liberation Sans", Arial, sans-serif;
    font-weight: bold;
    text-anchor: middle;
}

.caret {
    width: 9px;
    height: 7px;
    color: #333;
}

/* topo */
.titlebar {
    position: relative;
    display: flex;
    align-items: center;
    height: 35px;
    padding-left: 3px;
    font-family: "Open Sans", "Noto Sans", sans-serif;
    font-size: 17px;
    color: #888;
}

.logo {
    width: 22px;
    height: 24px;
    margin-right: 6px;
}

.snap {
    position: absolute;
    top: 0;
    left: 50%;
    width: 362px;
    height: 2px;
    transform: translateX(-50%);
    background: #e5e5e5;
}

.snap i {
    display: block;
    width: 72px;
    height: 2px;
    margin: 0 auto;
    background: #0078d7;
}

.window-buttons {
    display: flex;
    gap: 12px;
    margin-left: auto;
    padding-right: 9px;
}

.window-buttons button {
    width: 56px;
    height: 32px;
}

.quickbar {
    display: flex;
    height: 47px;
    background: #cbcbcb;
}

.quick {
    display: flex;
    align-items: center;
    gap: 28px;
    width: 290px;
    padding-left: 13px;
}

.quick button {
    gap: 9px;
}

.quick .caret {
    width: 10px;
    height: 8px;
    color: #666;
}

.quick .dim {
    margin-left: -8px;
}

.quick .dim .caret {
    color: #8f8f8f;
}

.document {
    flex: 1;
    display: flex;
    align-items: center;
    justify-content: center;
    gap: 9px;
    margin-top: 6px;
    padding-top: 3px;
    background: #f1f1f1;
    border-top-left-radius: 6px;
    border-top-right-radius: 6px;
    font-size: 18px;
}

.account {
    display: flex;
    align-items: center;
    justify-content: flex-end;
    gap: 28px;
    width: 478px;
    padding-right: 16px;
}

.help {
    width: 24px;
    height: 24px;
    border-radius: 50%;
    background: #5d5d5d;
    color: #ddd;
    font-size: 20px;
    font-weight: bold;
}

.avatar {
    width: 37px;
    height: 37px;
    border-radius: 50%;
    background: #ececec;
    color: #555;
}

.ribbon {
    display: flex;
    height: 124px;
    background: #f1f1f1;
    border-bottom: 2px solid #dcdcdc;
    font-size: 15px;
}

.workspace {
    gap: 8px;
    width: 165px;
    height: 92px;
    margin: 16px 7px 0 17px;
    border: 2px solid #dcdcdc;
    border-radius: 6px;
    font-weight: bold;
    color: #333;
}

.ribbon-main {
    flex: 1;
    min-width: 0;
}

.ribbon-tabs {
    display: flex;
    gap: 30px;
    height: 37px;
    padding-left: 20px;
}

.ribbon-tabs button {
    padding: 2px 19px 0;
    border-bottom: 5px solid transparent;
    white-space: nowrap;
}

.ribbon-tabs .active {
    color: #0e96d8;
    font-weight: bold;
    border-bottom-color: #0e96d8;
}

.groups {
    display: flex;
}

.group {
    display: flex;
    flex-direction: column;
    align-items: center;
    flex: none;
    height: 78px;
    margin-top: 3px;
    padding: 0 6px 0 7px;
    border-right: 2px solid #dedede;
}

.group-icons {
    display: flex;
    margin-top: -4px;
}

.group-icons button {
    width: 65px;
    height: 57px;
}

.group-icons .active {
    width: 57px;
    margin: 0 4px;
    background: #0e96d8;
}

.group-label {
    gap: 5px;
    height: 32px;
    padding: 4px 14px 0;
    white-space: nowrap;
}

.group:nth-last-child(2) {
    border-right: none;
}

.select-group {
    margin-left: auto;
    margin-right: 20px;
    border: none;
}

/* area 3D */
main {
    position: relative;
    flex: 1;
    min-height: 0;
    display: flex;
    flex-direction: column;
    justify-content: space-between;
    padding: 6px 6px 5px;
}

.scene {
    position: absolute;
    inset: 0;
    width: 100%;
    height: 100%;
}

.overlay-row {
    position: relative;
    display: grid;
    grid-template-columns: 1fr auto 1fr;
    align-items: start;
}

.cube {
    justify-self: end;
    margin: 24px 4px 0 0;
}

.bar {
    display: flex;
    align-items: center;
    width: 450px;
    height: 37px;
    padding: 0 1px 0 5px;
    background: #f1f1f1;
    border: 2px solid #cfcfcf;
    font-size: 15px;
    color: #777;
}

.bar span {
    margin-left: 13px;
}

.comments {
    padding-left: 22px;
    border-top: none;
}

.round {
    margin-left: auto;
}

.grip {
    width: 5px;
    height: 17px;
    margin-left: 10px;
    border-left: 2px solid #999;
    border-right: 2px solid #aaa;
}

.tree {
    list-style: none;
    margin: 8px 0 0;
    padding: 0;
}

.tree li {
    display: flex;
    gap: 10px;
    align-items: center;
    height: 30px;
    margin-bottom: 6px;
    padding-left: 24px;
}

.tree .level1 {
    padding-left: 51px;
}

.tree .level2 {
    padding-left: 78px;
}

.twist {
    width: 20px;
    height: 20px;
}

.node {
    display: flex;
    align-items: center;
    height: 30px;
    padding: 0 13px 0 4px;
    background: #f1f1f1;
    white-space: nowrap;
}

.node span {
    margin-left: 20px;
}

.eye {
    width: 24px;
    height: 16px;
    margin-right: 13px;
}

.selected .node {
    padding-right: 11px;
}

.selected .node span {
    height: 24px;
    margin: 0 6px 0 8px;
    padding: 0 19px 0 13px;
    line-height: 24px;
    background: #969696;
    color: #fff;
    font-weight: bold;
}

.notice {
    display: flex;
    align-items: center;
    height: 36px;
    padding-left: 5px;
    background: #f1f1f1;
}

.notice b {
    margin: 0 31px 0 8px;
}

.notice a {
    margin-left: 21px;
    padding: 0 19px;
    border-left: 2px solid #ddd;
    line-height: 36px;
    color: #0a86cf;
    text-decoration: none;
}

.navbar {
    display: flex;
    gap: 12px;
    height: 36px;
    padding: 0 6px 0 4px;
    background: #f1f1f1;
}

.navbar button {
    gap: 3px;
}

.navbar .caret {
    width: 8px;
}

.navbar .single {
    width: 28px;
}

/* painel */
.panel {
    position: absolute;
    top: 0;
    right: 110px;
    bottom: 60px;
    width: 374px;
    display: flex;
    flex-direction: column;
    background: #f1f1f1;
    border-left: 2px solid #c8c8c8;
    border-right: 2px solid #c8c8c8;
    overflow: hidden;
}

.panel-head {
    display: flex;
    align-items: center;
    gap: 15px;
    flex: none;
    height: 35px;
    padding: 0 0 3px 7px;
    border-bottom: 2px solid #d0d0d0;
    font-size: 15px;
    color: #777;
}

.panel-tabs {
    display: flex;
    flex: none;
    height: 42px;
    padding-top: 3px;
    box-shadow: inset 0 -2px #c8c8c8;
}

.panel-tabs button {
    width: 43px;
    margin-bottom: 4px;
    border-right: 1px solid #c4c4c4;
}

.panel-tabs .active {
    margin-bottom: 0;
    padding-bottom: 3px;
    background: #f1f1f1;
    border-top: 1px solid #c4c4c4;
}

.panel-body {
    flex: 1;
    min-height: 0;
    padding-top: 1px;
    overflow: hidden;
}

.panel h3 {
    display: flex;
    align-items: center;
    height: 45px;
    margin: 0;
    padding-left: 14px;
    font-size: 16px;
    font-weight: bold;
}

.fold {
    width: 13px;
    height: 10px;
    margin-right: 9px;
    color: #333;
}

.panel h3 label {
    margin-left: 11px;
}

.field {
    display: grid;
    grid-template-columns: 225px auto;
    align-items: center;
    height: 45px;
    padding-left: 17px;
    justify-content: start;
    white-space: nowrap;
}

.panel input[type="checkbox"] {
    appearance: none;
    position: relative;
    width: 20px;
    height: 20px;
    border: 2px solid #6a6a6a;
    border-radius: 5px;
    background: linear-gradient(#f4f4f4, #b9b9b9);
}

.field input[type="checkbox"] {
    margin-left: 7px;
}

.panel input[type="checkbox"]:checked {
    background: linear-gradient(#b5b5b5, #f0f0f0);
}

.panel input[type="checkbox"]:checked::after {
    content: "";
    position: absolute;
    left: 5px;
    top: 0;
    width: 6px;
    height: 12px;
    border: solid #111;
    border-width: 0 2px 2px 0;
    transform: rotate(38deg);
}

.spin {
    display: flex;
    width: 81px;
    height: 38px;
    border: 1px solid #c9c9c9;
    background: #fff;
}

.spin input {
    width: 59px;
    padding-left: 4px;
}

.spin div {
    flex: 1;
    display: flex;
    flex-direction: column;
    background: #e6e6e6;
    border-left: 1px solid #ddd;
}

.spin button {
    flex: 1;
}

.spin button + button {
    border-top: 1px solid #ccc;
}

.spin button::before {
    content: "";
    border: 4px solid transparent;
    border-top-width: 0;
    border-bottom-color: #111;
}

.spin .down::before {
    border-bottom-width: 0;
    border-top: 4px solid #111;
}

.list {
    position: relative;
    width: 81px;
    height: 39px;
}

.list select {
    width: 100%;
    height: 100%;
    padding-left: 8px;
    appearance: none;
    border: 2px solid #dedede;
    border-radius: 3px;
    background: #fff;
}

.list .caret {
    position: absolute;
    right: 8px;
    top: 16px;
    pointer-events: none;
}

hr {
    width: 351px;
    height: 4px;
    margin: 7px 0 4px 1px;
    border: none;
    background: #c3c3c3;
}

/* barra do windows */
.taskbar {
    position: relative;
    display: flex;
    flex: none;
    height: 60px;
    background: linear-gradient(90deg, #332b22 0, #2f2e22 20%, #2c2c22 50%, #2d2e22 70%, #444 77%, #444 89%, #323324 95%, #2d2d22);
    color: #fff;
    font-family: "Open Sans", "Noto Sans", sans-serif;
}

.start {
    width: 72px;
}

.search {
    display: flex;
    align-items: center;
    gap: 18px;
    width: 514px;
    padding-left: 16px;
    background: #f1f1f1;
    border: 2px solid #c4c4c4;
}

.search input {
    flex: 1;
    font-size: 21px;
    color: #222;
}

.search input::placeholder {
    color: #222;
    opacity: 1;
}

.task {
    width: 75px;
}

.open {
    background: linear-gradient(#76b9ed, #76b9ed) 50% 100% / 61px 3px no-repeat;
}

.current {
    background: #5a5b50;
    border-bottom: 3px solid #76b9ed;
    padding-top: 3px;
}

.tray {
    display: flex;
    align-items: center;
    margin-left: auto;
    padding-right: 31px;
    border-right: 7px solid transparent;
    box-shadow: inset -1px 0 #888;
}

.weather {
    margin: 2px 25px 0 13px;
    font-size: 20px;
}

.tray svg + svg {
    margin-left: 15px;
}

.clock {
    display: flex;
    flex-direction: column;
    width: 92px;
    margin: 0 29px 0 18px;
    align-items: center;
    font-size: 17px;
    line-height: 28px;
}

.notes {
    position: relative;
}

.notes span {
    position: absolute;
    right: -12px;
    bottom: 5px;
    width: 24px;
    height: 24px;
    border: 1px solid #999;
    border-radius: 50%;
    background: #2b2b25;
    font-size: 16px;
    line-height: 22px;
}

.notes {
    height: 60px;
}
</style>
